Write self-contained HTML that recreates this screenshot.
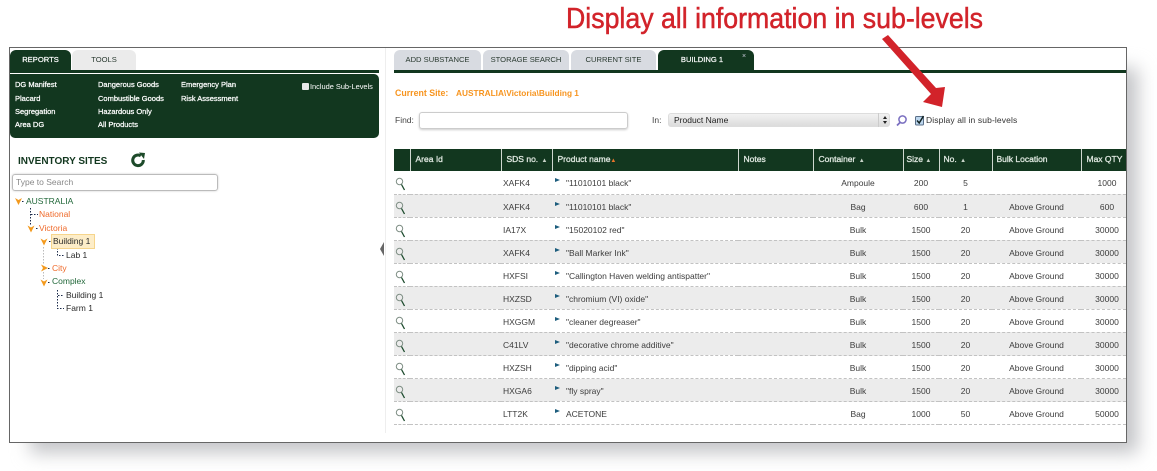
<!DOCTYPE html>
<html><head><meta charset="utf-8">
<style>
html,body{margin:0;padding:0;background:#fff}
body{width:1157px;height:471px;overflow:hidden;position:relative;font-family:"Liberation Sans",sans-serif;font-size:8.5px;color:#333}
.a{position:absolute;white-space:nowrap}
.shadow{position:absolute;left:30px;top:68px;width:1108px;height:385px;background:#c4c5c8;filter:blur(9px)}
.win{position:absolute;left:9px;top:47px;width:1116px;height:394px;background:#fff;border:1px solid #666}
.tab{position:absolute;top:50px;height:20px;line-height:19px;text-align:center;border-radius:6px 6px 0 0;font-size:7.6px;color:#2a3a30;background:#d8dbe1}
.g{background:#12371f}
.tab.g{background:#12371f;color:#fff;-webkit-text-stroke:.2px #fff}
.m{position:absolute;color:#fff;font-size:7.5px;-webkit-text-stroke:.25px #fff;white-space:nowrap}
.t{position:absolute;font-size:8.5px;white-space:nowrap}
table{position:absolute;left:394px;top:149px;width:732px;border-collapse:collapse;table-layout:fixed;font-size:8.5px}
th{height:22px;background:#12371f;color:#dfe8e0;font-weight:normal;-webkit-text-stroke:.3px #dfe8e0;text-align:left;padding:0 0 2px 5px;font-size:8.5px;border-left:1px solid #cfd8d0;box-sizing:border-box;white-space:nowrap;overflow:hidden}
th:first-child{border-left:none}
th i{font-style:normal;font-size:6px;color:#c8d4c8;margin-left:1px;-webkit-text-stroke:0}
td{height:23.07px;padding:2px 0 0;box-sizing:border-box;border-bottom:1px dashed #c2c2c2;text-align:center;color:#3c3c3c;white-space:nowrap}
tr.e td{background:#ececec}
td.s{text-align:left;padding-left:2px}
td.p{text-align:left;padding-left:14px;position:relative}
td.p:before{content:"";position:absolute;left:3px;top:7px;border-left:5px solid #1d5d7d;border-top:2.5px solid transparent;border-bottom:2.5px solid transparent}
td.q{position:relative}
td.q svg{position:absolute;left:1px;top:6px}
td.v{padding-left:7px}
</style></head>
<body>
<div class="shadow"></div>
<div class="win"></div>

<svg class="a" style="left:0;top:0" width="0" height="0"><symbol id="mg" viewBox="0 0 11 14"><circle cx="4.500" cy="4.500" r="3.200" fill="none" stroke="#7f8f85" stroke-width="1"/><path d="M6.500 7.500L9.500 13" stroke="#1b4a2c" stroke-width="1.300"/></symbol></svg>

<svg class="a" style="left:0;top:0" width="1157" height="471">
<text x="566" y="28" font-family="Liberation Sans" font-size="29" fill="#d2232a" stroke="#d2232a" stroke-width=".5" textLength="417" lengthAdjust="spacingAndGlyphs">Display all information in sub-levels</text>
</svg>

<div class="tab g" style="left:10px;width:61px">REPORTS</div>
<div class="tab" style="left:72px;width:64px;background:#ebebeb">TOOLS</div>
<div class="a g" style="left:10px;top:70px;width:369px;height:3px"></div>
<div class="a g" style="left:10px;top:74px;width:369px;height:64px;border-radius:0 5px 5px 5px"></div>
<div class="m" style="left:15px;top:80px">DG Manifest</div>
<div class="m" style="left:15px;top:94px">Placard</div>
<div class="m" style="left:15px;top:107px">Segregation</div>
<div class="m" style="left:15px;top:120px">Area DG</div>
<div class="m" style="left:98px;top:80px">Dangerous Goods</div>
<div class="m" style="left:98px;top:94px">Combustible Goods</div>
<div class="m" style="left:98px;top:107px">Hazardous Only</div>
<div class="m" style="left:98px;top:120px">All Products</div>
<div class="m" style="left:181px;top:80px">Emergency Plan</div>
<div class="m" style="left:181px;top:94px">Risk Assessment</div>
<div class="a" style="left:302px;top:83px;width:7px;height:7px;background:#e8e8e8;border-radius:1px"></div>
<div class="m" style="left:310px;top:82px;-webkit-text-stroke:0;font-size:7.400px">Include Sub-Levels</div>

<div class="a" style="left:18px;top:156px;font-weight:bold;font-size:10px;color:#12371f">INVENTORY SITES</div>
<svg class="a" style="left:130px;top:152px" width="16" height="16" viewBox="0 0 16 16"><path d="M10.800 3.800A5.300 5.300 0 1 0 13.300 8" fill="none" stroke="#1d4a2a" stroke-width="3"/><path d="M9 0.500l6 0.500-1 6z" fill="#1d4a2a"/></svg>
<div class="a" style="left:12px;top:174px;height:15px;border:1px solid #bbb;border-radius:3px;line-height:15px;padding-left:3px;color:#888;font-size:8.5px;width:201px;box-shadow:0 0 2px #ccc">Type to Search</div>

<svg class="a" style="left:0;top:0" width="120" height="320">
<g fill="none" stroke="#1a2a4a" stroke-dasharray="1.500 1.500">
<path d="M22 201.500H25M30.500 208V225M31 214.500H38M36 228.500H39M49 241.500H51M57.500 248V255.500H64M48 268.500H51M48 282.500H51M57.500 290V308.500H64M58 295.500H64"/>
</g>
<path d="M43.500 247V265M43.500 272V279" fill="none" stroke="#bbb" stroke-dasharray="1.500 1.500"/>
<g fill="#f39a1e">
<path d="M15 198l3.500 2 3.500-2-3.500 7z"/><path d="M27.500 225.500l3.500 2 3.500-2-3.500 7z"/><path d="M40.500 238.500l3.500 2 3.500-2-3.500 7z"/><path d="M40.500 279.500l3.500 2 3.500-2-3.500 7z"/>
<path d="M41 264.500l7 3.500-7 3.500 2-3.500z"/>
</g>
</svg>
<div class="t" style="left:26px;top:196px;color:#22683a">AUSTRALIA</div>
<div class="t" style="left:39px;top:209px;color:#ef6a2a">National</div>
<div class="t" style="left:39px;top:223px;color:#ef6a2a">Victoria</div>
<div class="a" style="left:51px;top:234px;width:42px;height:13px;background:#fdedc8;border:1px solid #f6d58c"></div>
<div class="t" style="left:53px;top:236px;color:#2a2a2a">Building 1</div>
<div class="t" style="left:66px;top:250px;color:#2a2a2a">Lab 1</div>
<div class="t" style="left:52px;top:263px;color:#ef6a2a">City</div>
<div class="t" style="left:52px;top:276px;color:#22683a">Complex</div>
<div class="t" style="left:66px;top:290px;color:#2a2a2a">Building 1</div>
<div class="t" style="left:66px;top:303px;color:#2a2a2a">Farm 1</div>
<div class="a" style="left:380px;top:242px;border-right:4px solid #666;border-top:7px solid transparent;border-bottom:7px solid transparent"></div>
<div class="a" style="left:385px;top:48px;width:1px;height:385px;background:#eee"></div>

<div class="tab" style="left:394px;width:87px">ADD SUBSTANCE</div>
<div class="tab" style="left:483px;width:86px">STORAGE SEARCH</div>
<div class="tab" style="left:571px;width:85px">CURRENT SITE</div>
<div class="tab g" style="left:658px;width:88px;padding-right:8px">BUILDING 1</div>
<div class="a" style="left:742px;top:53px;color:#ccd;font-size:7px">×</div>
<div class="a g" style="left:394px;top:70px;width:732px;height:3px"></div>

<div class="a" style="left:395px;top:88px;font-weight:bold;color:#f7941e;font-size:8.800px">Current Site:</div>
<div class="a" style="left:456px;top:88px;font-weight:bold;color:#f7941e;font-size:8.300px">AUSTRALIA\Victoria\Building 1</div>
<div class="t" style="left:395px;top:115px;color:#444">Find:</div>
<div class="a" style="left:419px;top:112px;width:207px;height:15px;border:1px solid #ccc;border-radius:3px;box-shadow:0 1px 2px #ccc"></div>
<div class="t" style="left:652px;top:115px;color:#444">In:</div>
<div class="a" style="left:668px;top:113px;width:222px;height:14px;border-radius:3px;background:linear-gradient(#f2f2f2,#dcdcdc);border:1px solid #ddd;box-sizing:border-box"></div>
<div class="t" style="left:674px;top:115px;color:#222">Product Name</div>
<div class="a" style="left:878px;top:113px;width:1px;height:14px;background:#ccc"></div>
<svg class="a" style="left:881px;top:114px" width="8" height="12"><path d="M2 5l2-3 2 3zM2 7l2 3 2-3z" fill="#222"/></svg>
<svg class="a" style="left:895px;top:114px" width="13" height="13" viewBox="0 0 13 13"><circle cx="7.500" cy="5.500" r="3.600" fill="none" stroke="#7a6fc0" stroke-width="1.500"/><path d="M5 8.500L2 11.500" stroke="#7a6fc0" stroke-width="1.800"/></svg>
<svg class="a" style="left:915px;top:115px" width="10" height="11" viewBox="0 0 10 11"><rect x=".5" y="1.500" width="8" height="8.500" rx="1" fill="#bcd6ee" stroke="#5a6f88"/><path d="M2 5.500l2.200 2.500L8.500 1" fill="none" stroke="#122" stroke-width="1.500"/></svg>
<div class="t" style="left:926px;top:115px;color:#333;letter-spacing:.12px">Display all in sub-levels</div>

<table>
<colgroup><col style="width:16px"><col style="width:91px"><col style="width:51px"><col style="width:186px"><col style="width:75px"><col style="width:90px"><col style="width:36px"><col style="width:53px"><col style="width:89px"><col style="width:45px"></colgroup>
<tr><th></th><th>Area Id</th><th>SDS no. <i>▲</i></th><th>Product name<i style="color:#e8742a;margin-left:0">▲</i></th><th>Notes</th><th>Container <i>▲</i></th><th style="padding-left:3px">Size <i style="margin-left:0">▲</i></th><th style="padding-left:4px">No. <i>▲</i></th><th style="padding-left:4px">Bulk Location</th><th>Max QTY <i>▲</i></th></tr>
<tr><td class="q"><svg width="11" height="14"><use href="#mg"/></svg></td><td></td><td class="s">XAFK4</td><td class="p">"11010101 black"</td><td></td><td>Ampoule</td><td>200</td><td>5</td><td></td><td class="v">1000</td></tr>
<tr class="e"><td class="q"><svg width="11" height="14"><use href="#mg"/></svg></td><td></td><td class="s">XAFK4</td><td class="p">"11010101 black"</td><td></td><td>Bag</td><td>600</td><td>1</td><td>Above Ground</td><td class="v">600</td></tr>
<tr><td class="q"><svg width="11" height="14"><use href="#mg"/></svg></td><td></td><td class="s">IA17X</td><td class="p">"15020102 red"</td><td></td><td>Bulk</td><td>1500</td><td>20</td><td>Above Ground</td><td class="v">30000</td></tr>
<tr class="e"><td class="q"><svg width="11" height="14"><use href="#mg"/></svg></td><td></td><td class="s">XAFK4</td><td class="p">"Ball Marker Ink"</td><td></td><td>Bulk</td><td>1500</td><td>20</td><td>Above Ground</td><td class="v">30000</td></tr>
<tr><td class="q"><svg width="11" height="14"><use href="#mg"/></svg></td><td></td><td class="s">HXFSI</td><td class="p">"Callington Haven welding antispatter"</td><td></td><td>Bulk</td><td>1500</td><td>20</td><td>Above Ground</td><td class="v">30000</td></tr>
<tr class="e"><td class="q"><svg width="11" height="14"><use href="#mg"/></svg></td><td></td><td class="s">HXZSD</td><td class="p">"chromium (VI) oxide"</td><td></td><td>Bulk</td><td>1500</td><td>20</td><td>Above Ground</td><td class="v">30000</td></tr>
<tr><td class="q"><svg width="11" height="14"><use href="#mg"/></svg></td><td></td><td class="s">HXGGM</td><td class="p">"cleaner degreaser"</td><td></td><td>Bulk</td><td>1500</td><td>20</td><td>Above Ground</td><td class="v">30000</td></tr>
<tr class="e"><td class="q"><svg width="11" height="14"><use href="#mg"/></svg></td><td></td><td class="s">C41LV</td><td class="p">"decorative chrome additive"</td><td></td><td>Bulk</td><td>1500</td><td>20</td><td>Above Ground</td><td class="v">30000</td></tr>
<tr><td class="q"><svg width="11" height="14"><use href="#mg"/></svg></td><td></td><td class="s">HXZSH</td><td class="p">"dipping acid"</td><td></td><td>Bulk</td><td>1500</td><td>20</td><td>Above Ground</td><td class="v">30000</td></tr>
<tr class="e"><td class="q"><svg width="11" height="14"><use href="#mg"/></svg></td><td></td><td class="s">HXGA6</td><td class="p">"fly spray"</td><td></td><td>Bulk</td><td>1500</td><td>20</td><td>Above Ground</td><td class="v">30000</td></tr>
<tr><td class="q"><svg width="11" height="14"><use href="#mg"/></svg></td><td></td><td class="s">LTT2K</td><td class="p">ACETONE</td><td></td><td>Bag</td><td>1000</td><td>50</td><td>Above Ground</td><td class="v">50000</td></tr>
</table>

<svg class="a" style="left:0;top:0" width="1157" height="471">
<path d="M882 39L888 35L936 88L945 87L942 107L923 102L931 94Z" fill="#d2232a"/>
</svg>
</body></html>
